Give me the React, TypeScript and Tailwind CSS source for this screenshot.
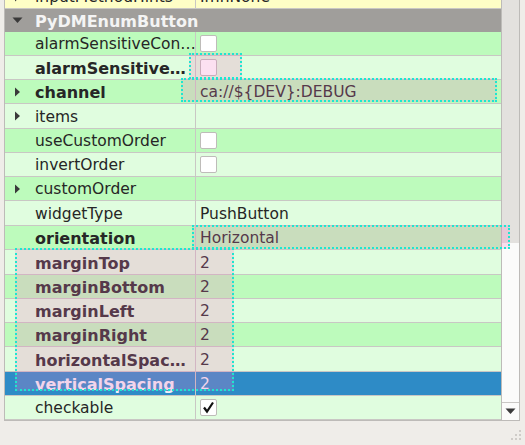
import React from "react";

type Kind = "dark" | "light" | "sel";
type Row = {
  name: string;
  bold?: boolean;
  arrow?: boolean;
  kind: Kind;
  h: number;
  value?: string;
  check?: "empty" | "checked";
};

const rows: Row[] = [
  { name: "alarmSensitiveCon…", kind: "dark", h: 24, check: "empty" },
  { name: "alarmSensitive…", bold: true, kind: "light", h: 24, check: "empty" },
  { name: "channel", bold: true, arrow: true, kind: "dark", h: 24, value: "ca://${DEV}:DEBUG" },
  { name: "items", arrow: true, kind: "light", h: 25 },
  { name: "useCustomOrder", kind: "dark", h: 24, check: "empty" },
  { name: "invertOrder", kind: "light", h: 24, check: "empty" },
  { name: "customOrder", arrow: true, kind: "dark", h: 24 },
  { name: "widgetType", kind: "light", h: 25, value: "PushButton" },
  { name: "orientation", bold: true, kind: "dark", h: 24, value: "Horizontal" },
  { name: "marginTop", bold: true, kind: "light", h: 25, value: "2" },
  { name: "marginBottom", bold: true, kind: "dark", h: 24, value: "2" },
  { name: "marginLeft", bold: true, kind: "light", h: 24, value: "2" },
  { name: "marginRight", bold: true, kind: "dark", h: 24, value: "2" },
  { name: "horizontalSpac…", bold: true, kind: "light", h: 25, value: "2" },
  { name: "verticalSpacing", bold: true, kind: "sel", h: 24, value: "2" },
  { name: "checkable", kind: "light", h: 24, check: "checked" },
];

const bgFor: Record<Kind, string> = {
  dark: "bg-[#bdfbbc]",
  light: "bg-[#e0fddf]",
  sel: "bg-[#2e8bc6]",
};

function RightArrow({ color = "#3a3a3a" }: { color?: string }) {
  return (
    <svg width="7" height="10" viewBox="0 0 7 10">
      <path d="M1 0.5 L6 5 L1 9.5 Z" fill={color} />
    </svg>
  );
}

function DownArrow() {
  return (
    <svg width="11" height="7" viewBox="0 0 11 7">
      <path d="M0.5 0.5 L10.5 0.5 L5.5 6 Z" fill="#3a3a3a" />
    </svg>
  );
}

function CheckBox({ checked }: { checked?: boolean }) {
  return (
    <div className="w-[17px] h-[17px] bg-white border border-[#bebcb9] rounded-[2px] flex items-center justify-center">
      {checked && (
        <svg width="13" height="13" viewBox="0 0 13 13">
          <path d="M2 6.5 L5 10.5 L11 1.5" fill="none" stroke="#111" strokeWidth="2.2" strokeLinejoin="miter" />
        </svg>
      )}
    </div>
  );
}

function PropRow({ r }: { r: Row }) {
  const sel = r.kind === "sel";
  const textColor = sel ? "text-[#f4f0f8]" : "text-[#262626]";
  const h = r.h === 25 ? "h-[25px]" : "h-[24px]";
  return (
    <div className={`flex ${h} ${bgFor[r.kind]} border-b border-[#c9c7c4] box-border`}>
      <div className="w-[191px] shrink-0 border-r border-[#c9c7c4] flex items-center overflow-hidden">
        <div className="w-[30px] shrink-0 flex items-center pl-[9px]">
          {r.arrow && <RightArrow />}
        </div>
        <span
          className={`${r.bold ? "font-bold text-[16px]" : "font-normal"} ${textColor} whitespace-nowrap pt-[3px]`}
        >
          {r.name}
        </span>
      </div>
      <div className="flex-1 flex items-center pl-[4px] overflow-hidden">
        {r.check && <CheckBox checked={r.check === "checked"} />}
        {r.value && <span className={`${textColor} whitespace-nowrap pt-[3px]`}>{r.value}</span>}
      </div>
    </div>
  );
}

export default function App() {
  return (
    <div
      className="relative w-[525px] h-[445px] bg-[#efede9] overflow-hidden text-[15.5px] leading-none"
      style={{ fontFamily: '"DejaVu Sans", sans-serif' }}
    >
      <div className="flex h-[421px]">
        <div className="w-[4px] shrink-0" />
        <div className="w-[497px] shrink-0 border-l border-b border-[#bdbbb8] overflow-hidden flex flex-col">
          {/* partially visible row */}
          <div className="h-[9px] overflow-hidden shrink-0">
            <div className="flex h-[24px] mt-[-15px] bg-[#fefec6] border-b border-[#c9c7c4] box-border">
              <div className="w-[191px] shrink-0 border-r border-[#c9c7c4] flex items-center">
                <div className="w-[30px] shrink-0 flex items-center pl-[9px]">
                  <RightArrow />
                </div>
                <span className="text-[#262626] whitespace-nowrap pt-[3px]">inputMethodHints</span>
              </div>
              <div className="flex-1 flex items-center pl-[4px]">
                <span className="text-[#262626] pt-[3px]">ImhNone</span>
              </div>
            </div>
          </div>
          {/* section header */}
          <div className="h-[23px] shrink-0 bg-[#a09e9b] flex items-center">
            <div className="w-[30px] shrink-0 flex items-center pl-[7px]">
              <DownArrow />
            </div>
            <span className="font-bold text-[16px] text-[#f4f4f4] pt-[3px]">PyDMEnumButton</span>
          </div>
          {rows.map((r) => (
            <PropRow key={r.name} r={r} />
          ))}
        </div>
        {/* scrollbar */}
        <div className="w-[19px] shrink-0 border-l border-r border-b border-[#bdbbb8] flex flex-col">
          <div className="h-[243px] bg-[#e3e1de] shrink-0" />
          <div className="flex-1 bg-[#fbfbfa]" />
          <div className="h-[18px] shrink-0 bg-[#fbfbfa] border-t border-[#c9c7c4] flex items-center justify-center">
            <DownArrow />
          </div>
        </div>
        <div className="flex-1" />
      </div>

      {/* size grip */}
      <div className="flex justify-end pr-[2px] pt-[8px]">
        <svg width="14" height="14" viewBox="0 0 14 14">
          <rect x="10" y="1" width="2" height="2" fill="#cfccc8" />
          <rect x="6" y="5" width="2" height="2" fill="#cfccc8" />
          <rect x="10" y="5" width="2" height="2" fill="#cfccc8" />
          <rect x="2" y="9" width="2" height="2" fill="#cfccc8" />
          <rect x="6" y="9" width="2" height="2" fill="#cfccc8" />
          <rect x="10" y="9" width="2" height="2" fill="#cfccc8" />
        </svg>
      </div>

      {/* selection overlays */}
      <div className="absolute left-[189px] top-[53px] w-[53px] h-[26px] border-2 border-dotted border-[#1ee6d0] bg-[rgba(241,119,194,0.23)]" />
      <div className="absolute left-[181px] top-[78px] w-[316px] h-[24px] border-2 border-dotted border-[#1ee6d0] bg-[rgba(241,119,194,0.23)]" />
      <div className="absolute left-[192px] top-[225px] w-[318px] h-[24px] border-2 border-dotted border-[#1ee6d0] bg-[rgba(241,119,194,0.23)]" />
      <div className="absolute left-[15px] top-[248px] w-[219px] h-[143px] border-2 border-dotted border-[#1ee6d0] bg-[rgba(241,119,194,0.23)]" />
    </div>
  );
}
